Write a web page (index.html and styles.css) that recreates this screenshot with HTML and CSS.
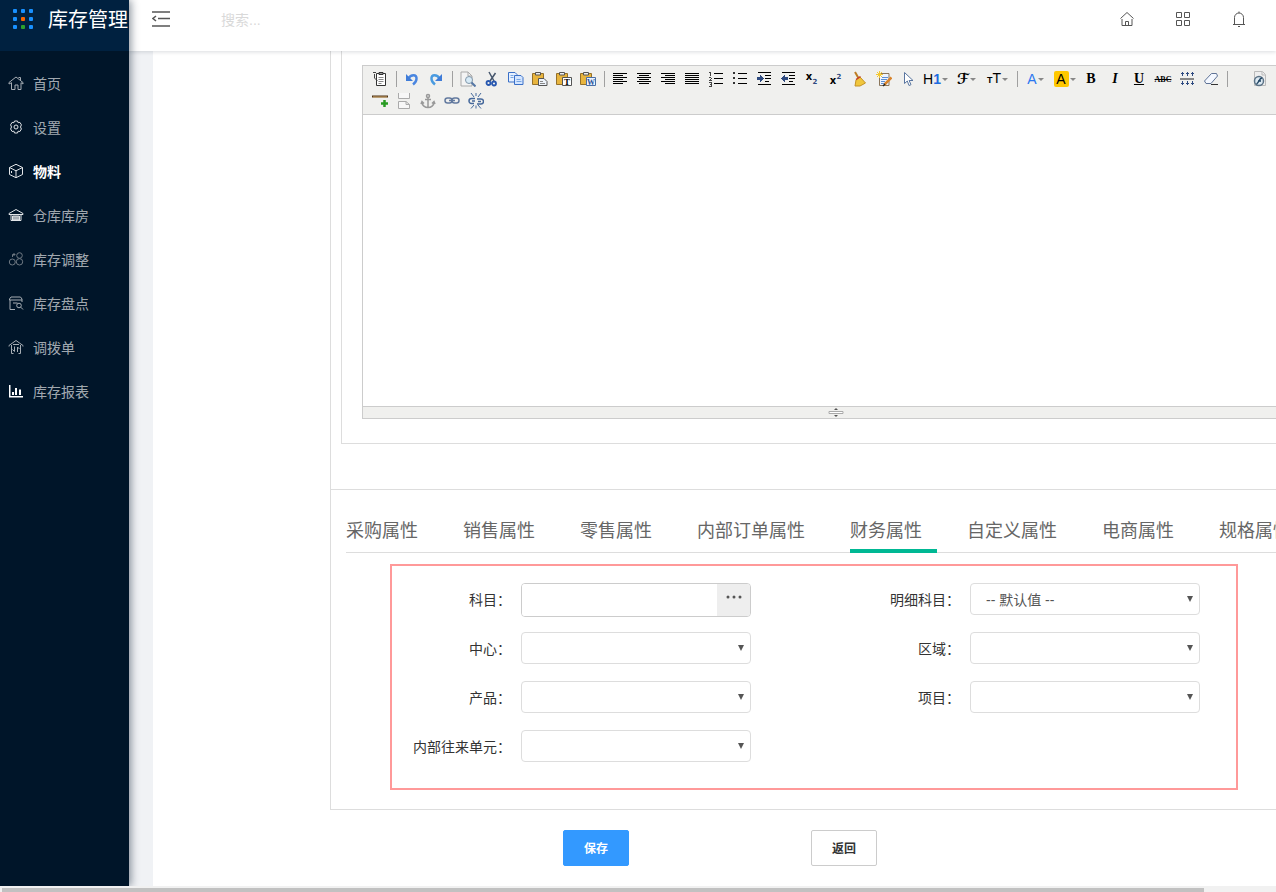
FILE: index.html
```
<!DOCTYPE html>
<html lang="zh-CN">
<head>
  <meta charset="UTF-8" />
  <meta name="viewport" content="width=device-width, initial-scale=1.0"/>
  <title>库存管理</title>
  <link rel="stylesheet" href="styles.css">
</head>
<body>
  <div class="app">
    <aside class="sidebar">
      <div class="logo">
        <svg width="22" height="22" viewBox="0 0 22 22">
          <g fill="#1890ff">
            <rect x="1" y="0" width="4" height="4" rx="1"/><rect x="9" y="0" width="4" height="4" rx="1"/><rect x="17" y="0" width="4" height="4" rx="1"/>
            <rect x="1" y="8" width="4" height="4" rx="1"/><rect x="17" y="8" width="4" height="4" rx="1"/>
            <rect x="1" y="16" width="4" height="4" rx="1"/><rect x="17" y="16" width="4" height="4" rx="1"/>
          </g>
          <rect x="9" y="8" width="4" height="4" rx="1" fill="#fa6400"/>
          <rect x="9" y="16" width="4" height="4" rx="1" fill="#2ca02c"/>
        </svg>
        <span>库存管理</span>
      </div>
      <nav class="menu">
        <a href="#">
          <svg viewBox="0 0 16 16"><path d="M1 7.500 8 2l7 5.500v1.500l-2-1.300V14.500h-3V10H7v4.500H3.500V7.700L1 9zM12.500 5V2.500h-2"/></svg>
          首页
        </a>
        <a href="#">
          <svg viewBox="0 0 16 16" class="bright"><path d="M6.500 2h3l.6 1.700 1.800-.3 1.500 2.400L12.500 8l.9 2-1.500 2.500-1.800-.3L9.500 14h-3l-.6-1.800-1.800.3L2.600 10l.9-2-.9-2.200 1.500-2.400 1.800.3z"/><circle cx="8" cy="8" r="2"/></svg>
          设置
        </a>
        <a href="#" class="active">
          <svg viewBox="0 0 16 16" class="bright"><path d="M8 1.300 14.500 4.500v7L8 14.700 1.500 11.500v-7zM1.500 4.500 8 7.800l6.500-3.300M8 7.800v6.900M3.500 8v2"/></svg>
          物料
        </a>
        <a href="#">
          <svg viewBox="0 0 16 16" class="bright"><path d="M1 7.500V6.500L8 2.500l7 4v1zM3 7v6.500h10V7"/><path d="M4.500 9h7v4h-7z" fill="#a6adb4"/></svg>
          仓库库房
        </a>
        <a href="#">
          <svg viewBox="0 0 16 16" class="dim"><circle cx="11.500" cy="4.500" r="2.800"/><circle cx="11.500" cy="10.800" r="3.200"/><circle cx="4.300" cy="11" r="3"/><path d="M4.500 6V3.500H7M5.500 2 7 3.500 5.500 5"/></svg>
          库存调整
        </a>
        <a href="#">
          <svg viewBox="0 0 16 16"><path d="M1.500 5V4L3 2h9.500L14 4v3M1.500 5H14M2 5v9.500h5M5 8h4.500"/><circle cx="11" cy="10.500" r="2.300"/><path d="m12.800 12.200 2.200 2.300"/></svg>
          库存盘点
        </a>
        <a href="#">
          <svg viewBox="0 0 16 16"><path d="M1 7.500V6.500L8 1.500l7 5v1M3.500 6v8.500h2M12.500 6v8.500h-2M6.500 7.500v5l-2-2M9.500 13V8l2 2M5 5.500h6"/></svg>
          调拨单
        </a>
        <a href="#">
          <svg viewBox="0 0 16 16" class="solid"><path d="M1 2h1.500v11H15v1.500H1zM4 9h2v3H4zM7 5h2v7H7zM11 6.500h2V12h-2z"/></svg>
          库存报表
        </a>
      </nav>
    </aside>

    <div class="main">
      <header class="header">
        <button class="icon-btn" aria-label="收起菜单">
          <svg width="18" height="16" viewBox="0 0 18 16" fill="none" stroke="#555" stroke-width="1.500"><path d="M0 1h18M6 7.500h12M0 15h18M4 5 1 7.500 4 10"/></svg>
        </button>
        <input class="search" type="text" placeholder="搜索..." aria-label="搜索">
        <div class="header-tools">
          <button class="tool-btn" aria-label="主页">
            <svg width="16" height="16" viewBox="0 0 16 16"><path d="M1.500 7.500 8 1.500l6.500 6M3 8v6.500h10V8M6.500 14.500v-4h3v4"/></svg>
          </button>
          <button class="tool-btn" aria-label="应用">
            <svg width="16" height="16" viewBox="0 0 16 16"><path d="M1.500 1.500h5v5h-5zM9.500 1.500h5v5h-5zM1.500 9.500h5v5h-5zM9.500 9.500h5v5h-5z"/></svg>
          </button>
          <button class="tool-btn" aria-label="通知">
            <svg width="16" height="16" viewBox="0 0 16 16"><path d="M3.500 13V6.500a4.500 4.500 0 0 1 9 0V13M2 13.500h12M8 .5V2M7 15.500h2"/></svg>
          </button>
        </div>
      </header>

      <main class="content">
        <div class="page">
          <div class="panel">
            <div class="detail-box">
              <div class="editor">
                <div class="toolbar">
                  <div class="toolbar-row">
                    <button aria-label="HTML代码"><svg viewBox="0 0 16 16"><path d="M4.500 2.500h9v12h-9z" fill="#fff" stroke="#333"/><path d="M7 1.500h4v2H7z" fill="#999" stroke="#333"/><path d="M6.500 6.500h5M6.500 8.500h5M6.500 10.500h5M6.500 12.500h3" stroke="#888"/><path d="M1 1.500h3M2.500 3v4l3 3" fill="none" stroke="#444"/></svg></button>
                    <i class="sep"></i>
                    <button aria-label="后退"><svg viewBox="0 0 16 16"><path d="M4 8C7 3 13 3 12.500 8c-.2 2.500-1.500 4-3.500 5.500" fill="none" stroke="#4a86e0" stroke-width="2.500"/><path d="M2 3v7h7z" fill="#3f7cd8"/></svg></button>
                    <button aria-label="前进"><svg viewBox="0 0 16 16"><path d="M12 8C9 3 3 3 3.500 8c.2 2.500 1.500 4 3.500 5.500" fill="none" stroke="#4a9be0" stroke-width="2.500"/><path d="M14 3v7H7z" fill="#3f7cd8"/></svg></button>
                    <i class="sep"></i>
                    <button aria-label="预览"><svg viewBox="0 0 16 16"><path d="M1 1h7l4 4v10H1z" fill="#f4f4f4" stroke="#aaa"/><path d="M8 1v4h4" fill="none" stroke="#aaa"/><circle cx="9" cy="9" r="3.500" fill="#d8ebf7" stroke="#8298aa"/><path d="m11.500 11.500 4 4" stroke="#5577a5" stroke-width="2"/></svg></button>
                    <button aria-label="剪切"><svg viewBox="0 0 16 16"><path d="M5 1l5 9M11.500 2 6 10" stroke="#46566c" stroke-width="1.500"/><circle cx="4.500" cy="12" r="2" fill="none" stroke="#2858b0" stroke-width="1.800"/><circle cx="10" cy="12.500" r="2" fill="none" stroke="#2858b0" stroke-width="1.800"/></svg></button>
                    <button aria-label="复制"><svg viewBox="0 0 16 16" stroke="#3a70c8"><path d="M.5 1.500H7l2 2V11H.5z" fill="#e5f0ff"/><path d="M6.500 4.500H13l2 2v7H6.500z" fill="#d3e5ff"/><path d="M2.500 4.500h3M2.500 6.500h3M8.500 8.500h4M8.500 10.500h5" stroke="#78a6e3"/></svg></button>
                    <button aria-label="粘贴"><svg viewBox="0 0 16 16"><path d="M.5 2.500h11v11H.5z" fill="#e8b53e" stroke="#94702b"/><path d="M3.500 1.500h5v2.500h-5z" fill="#eee" stroke="#555"/><path d="M6.500 7.500H12l3 3v4H6.500z" fill="#eef4fb" stroke="#555"/><path d="M8 10.500h3M8 12.500h5" stroke="#888"/></svg></button>
                    <button aria-label="粘贴为无格式文本"><svg viewBox="0 0 16 16"><path d="M.5 2.500h11v11H.5z" fill="#e8b53e" stroke="#94702b"/><path d="M3.500 1.500h5v2.500h-5z" fill="#eee" stroke="#555"/><path d="M6.500 6.500h9v8h-9z" fill="#fff" stroke="#555"/><text x="11" y="14" class="glyph">T</text></svg></button>
                    <button aria-label="从Word粘贴"><svg viewBox="0 0 16 16"><path d="M.5 2.500h11v11H.5z" fill="#e8b53e" stroke="#94702b"/><path d="M3.500 1.500h5v2.500h-5z" fill="#eee" stroke="#555"/><path d="M6.500 6.500h9v8h-9z" fill="#eaf2ff" stroke="#4a6fa5"/><text x="11" y="14" class="glyph glyph-word">W</text></svg></button>
                    <i class="sep"></i>
                    <button aria-label="左对齐"><svg viewBox="0 0 16 16" class="lines"><path d="M1 2.500h14M1 4.500h10M1 6.500h14M1 8.500h10M1 10.500h14M1 12.500h10"/></svg></button>
                    <button aria-label="居中"><svg viewBox="0 0 16 16" class="lines"><path d="M1 2.500h14M3 4.500h10M1 6.500h14M3 8.500h10M1 10.500h14M3 12.500h10"/></svg></button>
                    <button aria-label="右对齐"><svg viewBox="0 0 16 16" class="lines"><path d="M1 2.500h14M5 4.500h10M1 6.500h14M5 8.500h10M1 10.500h14M5 12.500h10"/></svg></button>
                    <button aria-label="两端对齐"><svg viewBox="0 0 16 16" class="lines"><path d="M1 2.500h14M1 4.500h14M1 6.500h14M1 8.500h14M1 10.500h14M1 12.500h14"/></svg></button>
                    <button aria-label="编号"><svg viewBox="0 0 16 16" class="lines"><path d="M6 2.500h9M6 7.500h9M6 12.500h9"/><path d="M2.500 1v4M1 1.500h1M1 6.500h2M3 7.500h1M2 8.500h1M1 9.500h3M1 11.500h3M2 13.500h2M1 15.500h3M3.500 11v5" stroke="#444"/></svg></button>
                    <button aria-label="项目符号"><svg viewBox="0 0 16 16" class="lines"><path d="M6 2.500h9M6 7.500h9M6 12.500h9"/><path d="M1 2h2M1 7h2M1 12h2" stroke-width="2" stroke="#333"/></svg></button>
                    <button aria-label="增加缩进"><svg viewBox="0 0 16 16" class="lines"><path d="M2 1.500h13M9 4.500h6M9 7.500h6M9 10.500h4M2 13.500h13"/><path d="M1 6h3V3.500L8 7.500 4 11.500V9H1z" fill="#2e4a80" stroke="none"/></svg></button>
                    <button aria-label="减少缩进"><svg viewBox="0 0 16 16" class="lines"><path d="M2 1.500h13M9 4.500h6M9 7.500h6M9 10.500h4M2 13.500h13"/><path d="M8 6H5V3.500L1 7.500l4 4V9h3z" fill="#2e4a80" stroke="none"/></svg></button>
                    <button aria-label="下标"><svg viewBox="0 0 16 16"><text x="5" y="9" class="glyph glyph-x">x</text><text x="11" y="13" class="glyph glyph-num">2</text></svg></button>
                    <button aria-label="上标"><svg viewBox="0 0 16 16"><text x="5" y="13" class="glyph glyph-x">x</text><text x="11" y="8" class="glyph glyph-num">2</text></svg></button>
                    <button aria-label="清理HTML代码"><svg viewBox="0 0 16 16"><path d="M3 1l4 7" stroke="#bd7e25" stroke-width="2"/><path d="M4 9l4-3 5.500 6L8 15H3z" fill="#f0c63c" stroke="#c49225"/><path d="m4 8.500 4.500-3" stroke="#c43a2c" stroke-width="1.500"/></svg></button>
                    <button aria-label="一键排版"><svg viewBox="0 0 16 16"><path d="M3.500 2.500H13v12H3.500z" fill="#eef4ff" stroke="#8b765b"/><path d="M6 6.500h6M5 8.500h6M5 10.500h4M5 12.500h3" stroke="#5c8fd3"/><path d="M3.500 0v7M0 3.500h7M1 1l5 5M6 1 1 6" stroke="#f4c832"/><path d="m8.500 13.500 7-7" stroke="#d8842c" stroke-width="2.500"/><path d="m7 15 2-2" stroke="#222" stroke-width="1.500"/></svg></button>
                    <button aria-label="全选"><svg viewBox="0 0 16 16"><path d="M4.500 1.500v11l2.800-2.500 1.700 4.500 2-.8-1.900-4.200H13z" fill="#fff" stroke="#5a76a0"/></svg></button>
                    <button class="drop" aria-label="段落"><span class="sans">H<b>1</b></span></button>
                    <button class="drop" aria-label="字体"><span class="script">ℱ</span></button>
                    <button class="drop" aria-label="文字大小"><span class="sans"><small>T</small>T</span></button>
                    <i class="sep"></i>
                    <button class="drop drop-color" aria-label="文字颜色"><span class="sans blue">A</span></button>
                    <button class="drop drop-color" aria-label="文字背景"><span class="sans mark">A</span></button>
                    <button class="serif" aria-label="粗体">B</button>
                    <button class="serif italic" aria-label="斜体">I</button>
                    <button class="serif underline" aria-label="下划线">U</button>
                    <button class="serif strike" aria-label="删除线">ABC</button>
                    <button aria-label="行距"><svg viewBox="0 0 16 16" class="lines"><path d="M1 7.500h14" stroke="#888" stroke-width="2"/><path d="M3.500 1v4M8.500 1v4M13.500 1v4M3.500 10v4M8.500 10v4M13.500 10v4M2 2.500h3M7 2.500h3M12 2.500h3M2 12.500h3M7 12.500h3M12 12.500h3" stroke="#2e4a80"/></svg></button>
                    <button aria-label="删除格式"><svg viewBox="0 0 16 16"><path d="m1.500 10 7-7.500h5L14.500 5 8 12.500H3z" fill="#f4f8ff" stroke="#5f7396"/><path d="M8 13.500h7" fill="none" stroke="#333"/></svg></button>
                    <i class="sep"></i>
                    <i class="blank"></i>
                    <button aria-label="Flash"><svg viewBox="0 0 16 16"><path d="M2.500.5h8l3 3v11h-11z" fill="#eee" stroke="#bbb"/><path d="M10 1v3h3" fill="none" stroke="#bbb"/><circle cx="7" cy="10" r="4.500" fill="#dce9f2" stroke="#5c7386" stroke-width="1.500"/><path d="M4.500 13C7 12 7 7 10 7M6 10h3" fill="none" stroke="#234765" stroke-width="1.500"/></svg></button>
                  </div>
                  <div class="toolbar-row">
                    <button aria-label="插入横线"><svg viewBox="0 0 16 16"><path d="M0 3.500h16" stroke="#4e3215" stroke-width="2"/><path d="M1 4h14" stroke="#d6ad6c"/><path d="M12.500 7v7M9 10.500h7" stroke="#289b22" stroke-width="2.500"/></svg></button>
                    <button aria-label="插入分页符"><svg viewBox="0 0 16 16" fill="#f7f7f7" stroke="#aaa"><path d="M2.500 0v5.500h11V0M2.500 15.500v-7H10l3.500 3v4zM10 8.500v3h3.500"/></svg></button>
                    <button aria-label="锚点"><svg viewBox="0 0 16 16" fill="none" stroke="#999" stroke-width="1.500"><circle cx="8" cy="3" r="1.500"/><path d="M8 5v9.500M5 6.500h6M2 9c0 3.500 3 5.500 6 5.500s6-2 6-5.500M1 11l1-2.500L4 10.500M15 11l-1-2.500-2 2"/></svg></button>
                    <button aria-label="超级链接"><svg viewBox="0 0 16 16" fill="none" stroke="#637a9f" stroke-width="1.500"><rect x="1" y="5" width="7" height="5" rx="2.500"/><rect x="8" y="5" width="7" height="5" rx="2.500"/><path d="M5 7.500h6"/></svg></button>
                    <button aria-label="取消超级链接"><svg viewBox="0 0 16 16" fill="none" stroke="#45689b" stroke-width="1.500"><path d="M7 5.500H3.500a2.500 2.500 0 0 0 0 5H6M4 8h3M9 6h4a2.300 2.300 0 0 1 0 5H9M10 8.500h3"/><path d="M8 0v3M3 0l3 4M13 0l-3 4M8 12.500v3M3 15.500 6 12M13 15.500 10 12" stroke-width="1"/></svg></button>
                  </div>
                </div>
                <textarea class="edit-area" aria-label="物料描述"></textarea>
                <div class="statusbar">
                  <svg width="16" height="11" viewBox="0 0 16 11"><path d="M1 4.500h14v2H1z" fill="#fff" stroke="#aaa"/><path d="M8 1l2 2H6zM8 10 6 8h4z" fill="#555"/></svg>
                </div>
              </div>
            </div>

            <section class="attributes">
              <div class="tabs">
                <a href="#">采购属性</a>
                <a href="#">销售属性</a>
                <a href="#">零售属性</a>
                <a href="#">内部订单属性</a>
                <a href="#" class="active">财务属性</a>
                <a href="#">自定义属性</a>
                <a href="#">电商属性</a>
                <a href="#">规格属性</a>
              </div>

              <form class="finance-form" id="financeForm">
                <div class="field">
                  <label for="subject">科目：</label>
                  <div class="picker">
                    <input type="text" id="subject" name="subject">
                    <button type="button" aria-label="选择科目"><svg width="16" height="4" viewBox="0 0 16 4" fill="#555"><circle cx="2" cy="2" r="1.500"/><circle cx="8" cy="2" r="1.500"/><circle cx="14" cy="2" r="1.500"/></svg></button>
                  </div>
                </div>
                <div class="field">
                  <label for="subSubject">明细科目：</label>
                  <select id="subSubject" name="subSubject"><option>-- 默认值 --</option></select>
                </div>
                <div class="field">
                  <label for="center">中心：</label>
                  <select id="center" name="center"><option></option></select>
                </div>
                <div class="field">
                  <label for="area">区域：</label>
                  <select id="area" name="area"><option></option></select>
                </div>
                <div class="field">
                  <label for="product">产品：</label>
                  <select id="product" name="product"><option></option></select>
                </div>
                <div class="field">
                  <label for="project">项目：</label>
                  <select id="project" name="project"><option></option></select>
                </div>
                <div class="field">
                  <label for="unit">内部往来单元：</label>
                  <select id="unit" name="unit"><option></option></select>
                </div>
              </form>
            </section>
          </div>

          <div class="actions">
            <button class="btn btn-primary" type="submit" form="financeForm">保存</button>
            <button class="btn" type="button">返回</button>
          </div>
        </div>
      </main>
    </div>
  </div>

  <div class="scrollbar"><div class="scroll-thumb"></div></div>
</body>
</html>
```
FILE: styles.css
```
* {
  box-sizing: border-box;
}

body {
  margin: 0;
  height: 100vh;
  display: flex;
  flex-direction: column;
  overflow: hidden;
  background-color: #fff;
  color: #333;
  font-family: "Liberation Sans", "Noto Sans CJK SC", sans-serif;
  font-size: 14px;
}

button,
input,
select,
textarea {
  font-family: inherit;
  font-size: inherit;
}

a {
  text-decoration: none;
}

.app {
  flex: 1;
  min-height: 0;
  display: flex;
  overflow: hidden;
}

/* sidebar */
.sidebar {
  position: relative;
  z-index: 2;
  flex: 0 0 129px;
  background-color: #001529;
  box-shadow: 2px 0 8px rgba(0, 21, 41, 0.45);
}

.logo {
  display: flex;
  gap: 14px;
  height: 51px;
  padding: 9px 0 0 12px;
  background-color: #002140;
  color: #fff;
  font-size: 20px;
  line-height: 22px;
  white-space: nowrap;
}

.logo svg {
  flex: none;
}

.menu {
  display: flex;
  flex-direction: column;
  padding-top: 10px;
}

.menu a {
  display: flex;
  align-items: center;
  gap: 9px;
  height: 44px;
  padding-left: 8px;
  color: rgba(255, 255, 255, 0.65);
}

.menu a.active {
  color: #fff;
  font-weight: bold;
}

.menu svg {
  width: 16px;
  height: 16px;
  fill: none;
  stroke: #a6adb4;
}

.menu svg.bright {
  stroke: #e2e5e8;
}

.menu svg.dim {
  stroke: #6f7983;
}

.menu svg.solid {
  fill: #fff;
  stroke: none;
}

/* header */
.main {
  flex: 1;
  min-width: 0;
  display: flex;
  flex-direction: column;
}

.header {
  position: relative;
  z-index: 1;
  flex: none;
  display: flex;
  align-items: flex-start;
  height: 51px;
  padding: 0 9px 0 23px;
  background-color: #fff;
  box-shadow: 0 1px 4px rgba(0, 21, 41, 0.15);
}

.icon-btn,
.tool-btn {
  display: flex;
  align-items: center;
  justify-content: center;
  height: 37px;
  padding: 0;
  border: none;
  background: none;
  cursor: pointer;
}

.tool-btn {
  width: 56px;
}

.tool-btn svg {
  fill: none;
  stroke: #555;
}

.search {
  width: 200px;
  height: 40px;
  margin-left: 51px;
  padding: 0;
  border: none;
  outline: none;
}

.search::placeholder {
  color: #d9d9d9;
}

.header-tools {
  display: flex;
  margin-left: auto;
}

/* page */
.content {
  flex: 1;
  min-height: 0;
  display: flex;
  padding-left: 24px;
  overflow: hidden;
  background-color: #f0f2f5;
}

.page {
  flex: 1;
  min-width: 1188px;
  padding-left: 177px;
  background-color: #fff;
}

.panel {
  border: 1px solid #ddd;
  border-top: none;
}

.detail-box {
  margin: 0 10px 45px;
  padding: 14px 20px 24px;
  border: 1px solid #ddd;
  border-top: none;
}

/* rich text editor */
.editor {
  display: flex;
  flex-direction: column;
  border: 1px solid #ccc;
}

.toolbar {
  padding: 2px 5px;
  border-bottom: 1px solid #ccc;
  background-color: #f0f0ee;
}

.toolbar-row {
  display: flex;
  align-items: center;
  height: 22px;
}

.toolbar button {
  flex: none;
  display: flex;
  align-items: center;
  justify-content: center;
  width: 24px;
  height: 22px;
  padding: 0;
  border: none;
  background: none;
  color: #000;
  cursor: pointer;
}

.toolbar svg {
  width: 16px;
  height: 16px;
}

.toolbar .lines {
  fill: none;
  stroke: #000;
  shape-rendering: crispEdges;
}

.sep {
  flex: none;
  width: 1px;
  height: 16px;
  margin: 0 3px 0 4px;
  background-color: #a0a0a0;
}

.blank {
  flex: none;
  width: 17px;
}

.glyph {
  font-family: "Liberation Serif", serif;
  font-size: 9px;
  font-weight: bold;
  text-anchor: middle;
}

.glyph-word {
  fill: #2a5699;
  font-size: 8px;
}

.glyph-x {
  font-family: "DejaVu Sans", sans-serif;
  font-size: 10px;
}

.glyph-num {
  fill: #2e4a80;
  font-family: "DejaVu Sans", sans-serif;
  font-size: 7px;
}

.toolbar .drop {
  width: 31px;
  gap: 1px;
}

.toolbar .drop-color {
  width: 29px;
}

.drop::after {
  content: "";
  border: 3px solid transparent;
  border-top-color: #888;
  border-bottom: none;
}

.sans {
  font-size: 14px;
  line-height: 16px;
}

.sans b {
  color: #1e6be0;
}

.sans small {
  font-size: 9px;
  font-weight: bold;
}

.sans.blue {
  color: #2a77f0;
}

.sans.mark {
  width: 15px;
  border-radius: 2px;
  background-color: #ffc800;
}

.script {
  font-family: "DejaVu Sans", sans-serif;
  font-size: 15px;
  font-weight: bold;
}

.toolbar .serif {
  font-family: "Liberation Serif", serif;
  font-size: 14px;
  font-weight: bold;
}

.toolbar .italic {
  font-style: italic;
}

.toolbar .underline {
  text-decoration: underline;
}

.toolbar .strike {
  font-size: 8px;
  text-decoration: line-through;
}

.edit-area {
  display: block;
  width: 100%;
  height: 291px;
  padding: 8px;
  border: none;
  outline: none;
  resize: none;
}

.statusbar {
  display: flex;
  justify-content: center;
  height: 12px;
  border-top: 1px solid #ccc;
  background-color: #f0f0ee;
}

/* attribute tabs */
.attributes {
  padding: 20px 0 19px;
  border-top: 1px solid #ddd;
}

.tabs {
  display: flex;
  height: 43px;
  margin-left: 15px;
  border-bottom: 1px solid #ddd;
}

.tabs a {
  flex: none;
  height: 43px;
  margin-right: 30px;
  padding-right: 15px;
  color: #666;
  font-size: 18px;
  line-height: 42px;
  white-space: nowrap;
}

.tabs a.active {
  border-bottom: 4px solid #00b894;
}

.finance-form {
  display: grid;
  grid-template-columns: 449px 1fr;
  grid-auto-rows: 32px;
  row-gap: 17px;
  width: 848px;
  margin: 11px 0 0 59px;
  padding: 17px 0 26px;
  border: 2px solid #ff9999;
}

.field {
  display: flex;
  align-items: flex-start;
  gap: 10px;
}

.field label {
  width: 119px;
  line-height: 34px;
  text-align: right;
  white-space: nowrap;
}

.field select {
  appearance: none;
  width: 230px;
  height: 32px;
  padding: 2px 24px 0 15px;
  border: 1px solid #ddd;
  border-radius: 4px;
  background: #fff url("data:image/svg+xml,%3Csvg xmlns='http://www.w3.org/2000/svg' width='6' height='6'%3E%3Cpath d='M0 0h6L3 6z' fill='%23555'/%3E%3C/svg%3E") no-repeat right 6px top 12px;
  color: #555;
}

.picker {
  display: flex;
  width: 230px;
  height: 34px;
  overflow: hidden;
  border: 1px solid #ccc;
  border-radius: 4px;
}

.picker input {
  flex: 1;
  min-width: 0;
  padding: 0 10px;
  border: none;
  outline: none;
}

.picker button {
  width: 33px;
  padding: 0 0 6px;
  border: none;
  background-color: #eee;
  cursor: pointer;
}

.picker svg {
  display: block;
  margin: 0 auto;
}

/* form buttons */
.actions {
  display: flex;
  gap: 182px;
  padding: 20px 0 20px 233px;
}

.btn {
  width: 66px;
  height: 36px;
  padding: 0 0 2px;
  border: 1px solid #ccc;
  border-radius: 2px;
  background-color: #fff;
  color: #333;
  font-size: 12px;
  font-weight: bold;
  cursor: pointer;
}

.btn-primary {
  border-color: #3399ff;
  background-color: #3399ff;
  color: #fff;
}

/* bottom scroll track */
.scrollbar {
  flex: none;
  height: 6px;
  padding: 2px 2px 0;
  background-color: #f1f1f1;
}

.scroll-thumb {
  width: 94.5%;
  height: 4px;
  background-color: #c1c1c1;
}
```
